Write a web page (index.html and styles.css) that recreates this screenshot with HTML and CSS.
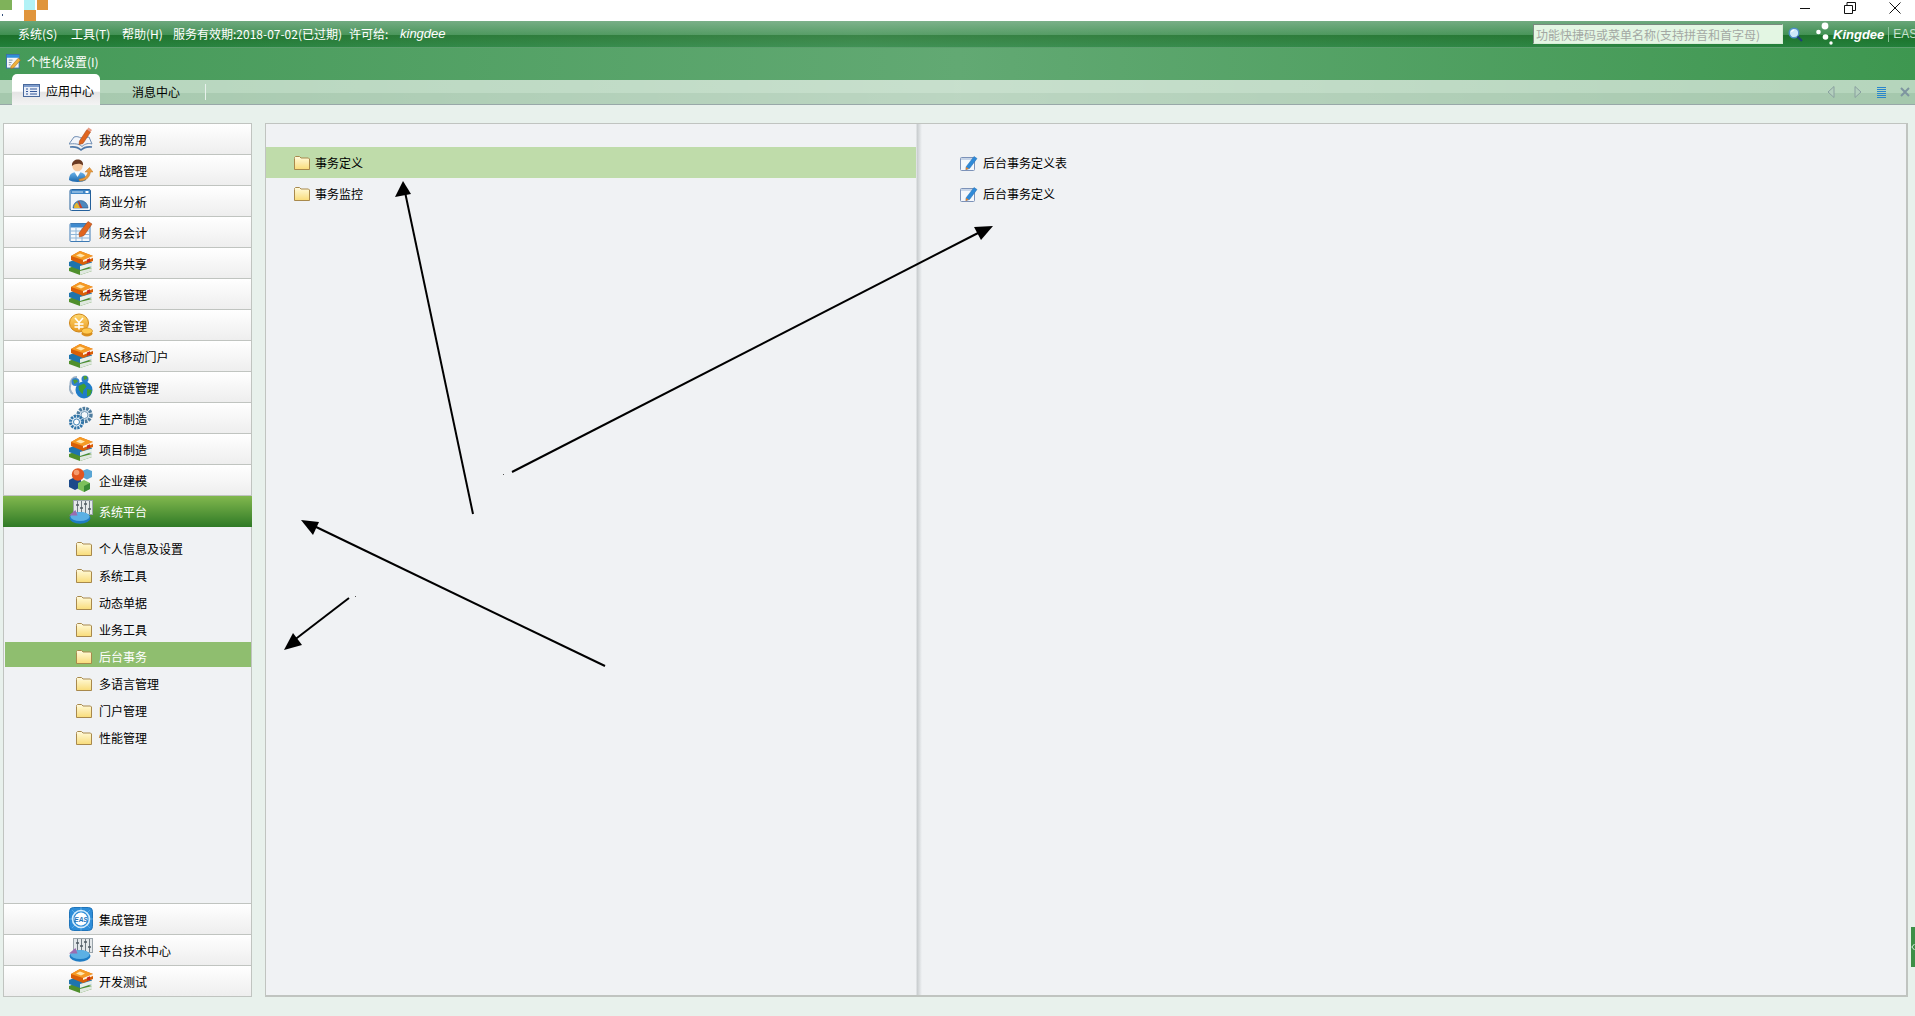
FILE: index.html
```html
<!DOCTYPE html>
<html lang="en">
<head>
  <meta charset="UTF-8">
  <meta name="viewport" content="width=device-width, initial-scale=1.0">
  <title>应用中心</title>
  <link rel="stylesheet" href="styles.css">
</head>
<body>

<!-- shared icons -->
<svg class="icon-defs" xmlns="http://www.w3.org/2000/svg">
  <defs>
    <linearGradient id="gFolder" x1="0" y1="0" x2="0" y2="1">
      <stop offset="0" stop-color="#fffbe0"/><stop offset="1" stop-color="#f9dc78"/>
    </linearGradient>
    <linearGradient id="gBlue" x1="0" y1="0" x2="0" y2="1">
      <stop offset="0" stop-color="#6db4ea"/><stop offset="1" stop-color="#1c68ad"/>
    </linearGradient>
    <linearGradient id="gCoin" x1="0" y1="0" x2="0" y2="1">
      <stop offset="0" stop-color="#ffd870"/><stop offset="1" stop-color="#e8981e"/>
    </linearGradient>
    <symbol id="i-folder" viewBox="0 0 16 14">
      <path d="M.5 2.500V1.500l1-1h4l1.500 1.500h7.500l1 1v10.500h-15z" fill="url(#gFolder)" stroke="#a8894c"/>
      <path d="M1 4.500h14" stroke="#fff3bb"/>
    </symbol>
    <symbol id="i-books" viewBox="0 0 24 24">
      <path d="M0 17l10-4 13 4v3l-12 4-11-4z" fill="#4f8f2c"/>
      <path d="M11 20l12-3v3l-12 4z" fill="#dfe8df"/>
      <path d="M0 11l10-4 13 4v4l-12 4-11-4z" fill="#1f74ae"/>
      <path d="M11 15l12-3.500v3.500l-12 4z" fill="#e8efe8"/>
      <path d="M2 5l9-5 13 5v5l-10 4-12-5z" fill="#d95f08"/>
      <path d="M2 5l9-5 13 5-10 4z" fill="#f59a24"/>
      <path d="M7 4.500l4-2 5 2-4 2z" fill="#ffe6ae"/>
      <path d="M14 9l10-4v2l-10 4z" fill="#fdf0df"/>
      <path d="M18 8.500l3-1.200v4l-1.500-.6-1.500 1.200z" fill="#c8281c"/>
    </symbol>
    <symbol id="i-openbook" viewBox="0 0 24 24">
      <path d="M0 17l5-7c3-1 5 0 7 1l8-1 3 7c-3-1-7-.5-10 2.500-3-3-8-3-13-2.500z" fill="#f2f5fa" stroke="#6f8db3"/>
      <path d="M1 20c4-.5 8 0 11 3 3-3 7-3.500 11-3" fill="none" stroke="#4f78a8" stroke-width="1.600"/>
      <path d="M10.500 14L18 2.500l3.500 2.500L14 16.500l-4 1z" fill="#e0651f" stroke="#a8491b" stroke-width=".6"/>
      <path d="M18 2.500L19.500 .5l3.500 2.500L21.500 5z" fill="#e79a82"/>
    </symbol>
    <symbol id="i-person" viewBox="0 0 24 24">
      <path d="M0 22c0-6 3-8 8.500-8s8.500 2 8.500 8c-3 2.500-14 2.500-17 0z" fill="url(#gBlue)"/>
      <path d="M5.500 14l3 5 3-5z" fill="#fff"/>
      <circle cx="8.500" cy="8" r="5.200" fill="#f6c9a0"/>
      <path d="M3 8c-1-8 12-9 11-.5-2-2.500-8-2.500-11 .5z" fill="#6a3a22"/>
      <path d="M10 21c4 0 8-2 9-7l-3 0 4.500-4.500 3.500 4.500-2.500 0c-1 6-5 9-11 9z" fill="#e8993c" stroke="#bd7a28" stroke-width=".5"/>
    </symbol>
    <symbol id="i-gauge" viewBox="0 0 24 24">
      <rect x="1" y=".5" width="20.500" height="21" rx="1.500" fill="#f2f6fb" stroke="#24609b"/>
      <rect x="1.500" y="1" width="19.500" height="4" fill="#3f86c7"/>
      <path d="M3 3h11" stroke="#cfe4f6"/><rect x="16.500" y="2" width="3" height="2" fill="#fff"/>
      <path d="M4 19a7.500 7.500 0 0 1 15 0z" fill="#4d87bd" stroke="#1f558c" stroke-width=".6"/>
      <path d="M5 19a6.500 6.500 0 0 1 3-5.500l3.500 5.500z" fill="#e8b52c"/>
      <path d="M11 19l-2-7 1 0 3.500 7z" fill="#c93b24"/>
    </symbol>
    <symbol id="i-table" viewBox="0 0 24 24">
      <rect x="1" y="3.500" width="20" height="18" rx="1" fill="#f4f8fc" stroke="#3e7ab4"/>
      <rect x="1.500" y="4" width="19" height="3.500" fill="#3f8ace"/>
      <path d="M1 11h20M1 14.500h20M1 18h20M7 8v13M13 8v13" stroke="#8fb6d9"/>
      <path d="M10 13L19 1.500l4 2.500-8 11.500-4.500 1.500z" fill="#e0651f" stroke="#a8491b" stroke-width=".6"/>
    </symbol>
    <symbol id="i-coins" viewBox="0 0 24 24">
      <ellipse cx="10" cy="10" rx="9.500" ry="9" fill="url(#gCoin)" stroke="#cf8616"/>
      <path d="M6 5l4 4.500 4-4.500M10 9.500v7M5.500 11h9M5.500 14h9" fill="none" stroke="#fff" stroke-width="1.600"/>
      <ellipse cx="18" cy="20.500" rx="5.500" ry="3" fill="#d98f1e"/>
      <ellipse cx="18" cy="18" rx="5.500" ry="3" fill="#ffc94f" stroke="#c98214" stroke-width=".6"/>
    </symbol>
    <symbol id="i-globe" viewBox="0 0 24 24">
      <path d="M1.500 10C1 5 4 2 8 2M4 19c-3-2-4-6-2.500-9" fill="none" stroke="#9cb0c4" stroke-width="2"/>
      <circle cx="6.500" cy="7" r="4" fill="#2f7fcb"/>
      <circle cx="16" cy="4" r="3.500" fill="#2f7fcb"/>
      <path d="M14.500 1l3 0 1 2.500-3.500 1.500zM4 5l3.500-.5 1.500 2-3.500 2.500z" fill="#4f9e32"/>
      <circle cx="15" cy="15" r="8.500" fill="#1f7cc8"/>
      <path d="M9.500 11l5.500-2.500 2.500 3-3 3.500-1 4.500-3.500-4.500zM18 14l5 1-1.500 5-3.500 1.500z" fill="#429e30"/>
    </symbol>
    <symbol id="i-gears" viewBox="0 0 24 24">
      <circle cx="15.500" cy="9" r="6.500" fill="#dce8f2" stroke="#4f7d9f" stroke-width="3.400" stroke-dasharray="2.500 1"/>
      <circle cx="15.500" cy="9" r="3.500" fill="#f4f8fb" stroke="#6f96b3"/>
      <circle cx="7.500" cy="16" r="6" fill="#e6eff6" stroke="#2f74a8" stroke-width="3" stroke-dasharray="2.200 .9"/>
      <circle cx="7.500" cy="16" r="3" fill="#fff" stroke="#3f82b4"/>
    </symbol>
    <symbol id="i-cubes" viewBox="0 0 24 24">
      <path d="M13 3l5-2 5 2v6l-5 2.500-5-2.500z" fill="#5aa5d4"/>
      <path d="M0 12l6-3 6 3v7l-6 3-6-3z" fill="#1d4a8a"/>
      <path d="M9 15l6-3 6 3v6l-6 3-6-3z" fill="#7cc05b"/>
      <path d="M15 18v6l6-3v-6z" fill="#3a8a35"/>
      <circle cx="9" cy="6.500" r="6.200" fill="#e2551f"/>
      <circle cx="7.500" cy="4.500" r="2.800" fill="#f59a6e"/>
    </symbol>
    <symbol id="i-sliders" viewBox="0 0 24 24">
      <rect x="4.500" y=".5" width="19" height="14" fill="#e4e8ea" stroke="#9aa4aa"/>
      <path d="M8.500 1v13M12.500 1v13M16.500 1v13M20.500 1v13" stroke="#6f7a82"/>
      <path d="M7 5h3M11 8h3M15 4h3M19 9h3" stroke="#4f5a62" stroke-width="1.500"/>
      <ellipse cx="11" cy="18" rx="10.500" ry="5.800" fill="#1f7cc4"/>
      <ellipse cx="11" cy="16.500" rx="9.500" ry="4.600" fill="#5cb0e4"/>
      <path d="M0 15.500l6.500-5.500 2 5.500z" fill="#9a6db0"/>
    </symbol>
    <symbol id="i-eas" viewBox="0 0 24 24">
      <rect x=".5" y=".5" width="23" height="23" rx="4" fill="#2e8dd8" stroke="#1f74ba"/>
      <path d="M0 12h24M12 0v24M3 3l18 18M21 3L3 21" stroke="#7cc0ee" stroke-width=".6"/>
      <circle cx="12" cy="12" r="8.500" fill="none" stroke="#d5ecfb" stroke-width="1.600"/>
      <circle cx="12" cy="12" r="6.500" fill="#fff"/>
      <text x="12" y="14.500" text-anchor="middle" class="eas-text">EAS</text>
    </symbol>
    <symbol id="i-note" viewBox="0 0 18 16">
      <rect x=".5" y="2.500" width="14" height="13" rx="1" fill="#f5f8fc" stroke="#7c92b8"/>
      <path d="M1 3h13v2H1z" fill="#c7d5e8"/>
      <path d="M6 12L14 1.500l3 2L9.500 13.500 6 14.500z" fill="#2f8ad8" stroke="#1e6cb0" stroke-width=".5"/>
      <path d="M5.500 15l.8-3 2.500 1.800z" fill="#e8802a"/>
    </symbol>
    <symbol id="i-settings" viewBox="0 0 16 16">
      <rect x=".5" y=".5" width="13.500" height="14.500" fill="#f3f6fa" stroke="#3b6ea5"/>
      <rect x="1" y="1" width="13" height="3" fill="#2f8fd8"/>
      <path d="M3 6.500h4M3 9h3M3 11.500h2" stroke="#7c8ea0"/>
      <path d="M5.500 13L13 4.500l2.500 2-7.500 8.500-3 .5z" fill="#f0b23c" stroke="#a06a1c" stroke-width=".6"/>
    </symbol>
    <symbol id="i-list" viewBox="0 0 17 13">
      <rect x=".5" y=".5" width="16" height="12" fill="#e8eef8" stroke="#49699c"/>
      <path d="M1 1h15v2H1z" fill="#7e9ccc"/>
      <path d="M3 5h2M3 7.500h2M3 10h2M7 5h7M7 7.500h7M7 10h7" stroke="#34589a"/>
    </symbol>
  </defs>
</svg>

<div class="titlebar">
  <svg class="logo" viewBox="0 0 48 21" width="48" height="21">
    <rect width="12" height="10" fill="#7fb25a"/>
    <rect x="24" width="11" height="10" fill="#b2f2f6"/>
    <rect x="37" width="11" height="10" fill="#e0953c"/>
    <rect x="24" y="10" width="12" height="11" fill="#e0953c"/>
    <rect x="2" y="14" width="1" height="2" fill="#34507c"/>
  </svg>
  <div class="win-controls">
    <svg width="12" height="12" viewBox="0 0 12 12"><path d="M1 6.500h10" stroke="#111"/></svg>
    <svg width="12" height="12" viewBox="0 0 12 12"><path d="M.5 3.500h8v8h-8zM3 3.500V.5h8.500v8H8.500" fill="none" stroke="#111"/></svg>
    <svg width="12" height="12" viewBox="0 0 12 12"><path d="M.5.5l11 11M11.500.5l-11 11" stroke="#111"/></svg>
  </div>
</div>

<div class="menubar">
  <span class="menu-item">系统(S)</span>
  <span class="menu-item">工具(T)</span>
  <span class="menu-item">帮助(H)</span>
  <span class="menu-info">服务有效期:2018-07-02(已过期)</span>
  <span class="menu-lic">许可给:</span>
  <em class="menu-user">kingdee</em>
  <div class="menu-right">
    <input class="quick-search" type="text" placeholder="功能快捷码或菜单名称(支持拼音和首字母)">
    <svg class="search-icon" width="15" height="15" viewBox="0 0 15 15">
      <circle cx="6" cy="6" r="4.800" fill="#cfe8fb" stroke="#4f8ec8" stroke-width="1.400"/>
      <path d="M3.500 5a3 3 0 0 1 2.500-2" fill="none" stroke="#fff" stroke-width="1.200"/>
      <path d="M9.500 9.500l4.500 4.500" stroke="#1f3f78" stroke-width="2.200"/>
    </svg>
    <svg class="brand-dots" width="18" height="24" viewBox="0 0 18 24">
      <circle cx="9" cy="4" r="3.400" fill="#fff"/>
      <circle cx="2.500" cy="10" r="2.300" fill="#fff"/>
      <circle cx="9.500" cy="15" r="2.800" fill="#fff"/>
      <circle cx="15" cy="21" r="1.700" fill="#fff"/>
    </svg>
    <span class="brand">Kingdee</span>
    <span class="brand-eas">EAS</span>
  </div>
</div>

<div class="toolbar">
  <svg class="tool-icon" width="15" height="15"><use href="#i-settings"/></svg>
  <span>个性化设置(I)</span>
</div>

<div class="tabbar">
  <div class="tab tab-active">
    <svg width="17" height="13"><use href="#i-list"/></svg>
    <span>应用中心</span>
  </div>
  <div class="tab">消息中心</div>
  <div class="tab-sep"></div>
  <div class="tab-tools">
    <svg class="tool-prev" width="8" height="12" viewBox="0 0 8 12"><path d="M7 .5v11L1 6z" fill="#b3d0bd" stroke="#8aa0a0"/></svg>
    <svg width="8" height="12" viewBox="0 0 8 12"><path d="M1 .5v11L7 6z" fill="#b3d0bd" stroke="#8aa0a0"/></svg>
    <svg width="9" height="11" viewBox="0 0 9 11"><path d="M0 .5h9M0 2.500h9M0 4.500h9M0 6.500h9M0 8.500h9M0 10.500h9" stroke="#2a86cc"/></svg>
    <svg class="tool-close" width="10" height="10" viewBox="0 0 10 10"><path d="M1 1l8 8M9 1L1 9" stroke="#7e95a0" stroke-width="2"/></svg>
  </div>
</div>

<div class="main">
  <div class="nav">
    <div class="nav-row"><svg class="nav-icon"><use href="#i-openbook"/></svg>我的常用</div>
    <div class="nav-row"><svg class="nav-icon"><use href="#i-person"/></svg>战略管理</div>
    <div class="nav-row"><svg class="nav-icon"><use href="#i-gauge"/></svg>商业分析</div>
    <div class="nav-row"><svg class="nav-icon"><use href="#i-table"/></svg>财务会计</div>
    <div class="nav-row"><svg class="nav-icon"><use href="#i-books"/></svg>财务共享</div>
    <div class="nav-row"><svg class="nav-icon"><use href="#i-books"/></svg>税务管理</div>
    <div class="nav-row"><svg class="nav-icon"><use href="#i-coins"/></svg>资金管理</div>
    <div class="nav-row"><svg class="nav-icon"><use href="#i-books"/></svg>EAS移动门户</div>
    <div class="nav-row"><svg class="nav-icon"><use href="#i-globe"/></svg>供应链管理</div>
    <div class="nav-row"><svg class="nav-icon"><use href="#i-gears"/></svg>生产制造</div>
    <div class="nav-row"><svg class="nav-icon"><use href="#i-books"/></svg>项目制造</div>
    <div class="nav-row"><svg class="nav-icon"><use href="#i-cubes"/></svg>企业建模</div>
    <div class="nav-row nav-row-active"><svg class="nav-icon"><use href="#i-sliders"/></svg>系统平台</div>

    <div class="sub-list">
      <div class="sub-item"><svg class="folder"><use href="#i-folder"/></svg>个人信息及设置</div>
      <div class="sub-item"><svg class="folder"><use href="#i-folder"/></svg>系统工具</div>
      <div class="sub-item"><svg class="folder"><use href="#i-folder"/></svg>动态单据</div>
      <div class="sub-item"><svg class="folder"><use href="#i-folder"/></svg>业务工具</div>
      <div class="sub-item sub-item-active"><svg class="folder"><use href="#i-folder"/></svg>后台事务</div>
      <div class="sub-item"><svg class="folder"><use href="#i-folder"/></svg>多语言管理</div>
      <div class="sub-item"><svg class="folder"><use href="#i-folder"/></svg>门户管理</div>
      <div class="sub-item"><svg class="folder"><use href="#i-folder"/></svg>性能管理</div>
    </div>

    <div class="nav-row nav-row-top"><svg class="nav-icon"><use href="#i-eas"/></svg>集成管理</div>
    <div class="nav-row"><svg class="nav-icon"><use href="#i-sliders"/></svg>平台技术中心</div>
    <div class="nav-row"><svg class="nav-icon"><use href="#i-books"/></svg>开发测试</div>
  </div>

  <div class="content">
    <div class="tree">
      <div class="tree-row tree-row-active"><svg class="folder"><use href="#i-folder"/></svg>事务定义</div>
      <div class="tree-row"><svg class="folder"><use href="#i-folder"/></svg>事务监控</div>
    </div>
    <div class="splitter"></div>
    <div class="detail">
      <div class="detail-row"><svg class="note"><use href="#i-note"/></svg>后台事务定义表</div>
      <div class="detail-row"><svg class="note"><use href="#i-note"/></svg>后台事务定义</div>
    </div>
  </div>
  <svg class="side-handle" width="4" height="40" viewBox="0 0 4 40">
    <rect width="4" height="40" fill="#3d8f47"/>
    <path d="M3.500 17L.8 20l2.700 3" fill="none" stroke="#e8f1ec"/>
  </svg>
</div>

<!-- hand drawn arrows on top of the window -->
<svg class="arrows" width="1915" height="1016" viewBox="0 0 1915 1016">
  <g stroke="#000" stroke-width="2">
    <path d="M473 514L405 192"/>
    <path d="M512 472L980 232"/>
    <path d="M605 666L312 525"/>
    <path d="M349 598L293 641"/>
  </g>
  <path d="M403 181l-8 16 16-3z"/>
  <path d="M993 226l-19 1 7 13z"/>
  <path d="M301 520l12 15 6-13z"/>
  <path d="M284 650l18-5-9-12z"/>
  <rect x="503" y="474" width="1" height="1" fill="#555"/>
  <rect x="355" y="596" width="1" height="1" fill="#555"/>
</svg>

</body>
</html>
```

FILE: styles.css
```css
html, body {
  margin: 0;
  height: 100%;
}
body {
  display: flex;
  flex-direction: column;
  height: 1016px;
  overflow: hidden;
  position: relative;
  background-color: #e8f1ec;
  font-family: "Noto Sans CJK SC", "Liberation Sans", sans-serif;
  font-size: 12px;
  color: #000;
}
.icon-defs {
  width: 0;
  height: 0;
  flex: none;
}
.eas-text {
  font-family: "Liberation Sans", sans-serif;
  font-size: 6.500px;
  font-weight: bold;
  font-style: italic;
  fill: #1f74ba;
}

/* top of the window */
.titlebar {
  display: flex;
  justify-content: space-between;
  flex: none;
  height: 21px;
  background-color: #fff;
}
.win-controls {
  display: flex;
  gap: 33px;
  padding: 2px 14px 0 0;
}
.menubar {
  display: flex;
  align-items: center;
  flex: none;
  height: 24px;
  padding: 0 0 2px 18px;
  background:
    linear-gradient(90deg, rgba(255, 255, 255, 0), rgba(255, 255, 255, 0.14) 45%, rgba(255, 255, 255, 0)),
    linear-gradient(#6aa67a 0, #3e8f50 14px, #1b7029 14px, #22803a 100%);
  border-bottom: 1px solid #5da06f;
  color: #fff;
  white-space: nowrap;
}
.menu-item {
  width: 53px;
  flex: none;
}
.menu-item:nth-child(2) {
  width: 51px;
}
.menu-item:nth-child(3) {
  width: 51px;
}
.menu-info {
  width: 176px;
  flex: none;
}
.menu-lic {
  width: 51px;
  flex: none;
}
.menu-user {
  font-family: "Liberation Sans", sans-serif;
  font-size: 13px;
}
.menu-right {
  display: flex;
  align-items: center;
  margin-top: 2px;
  margin-left: auto;
  width: 382px;
  flex: none;
  overflow: hidden;
}
.quick-search {
  box-sizing: border-box;
  width: 250px;
  height: 20px;
  flex: none;
  padding: 0 2px;
  background-color: #e3f6e3;
  border: 1px solid #d8ecd8;
  border-top: 1px solid #7a8a80;
  border-left: 1px solid #7a8a80;
  font: inherit;
}
.quick-search::placeholder {
  color: #a3a8a3;
  opacity: 1;
}
.search-icon {
  flex: none;
  margin-left: 5px;
}
.brand-dots {
  flex: none;
  margin-left: 13px;
}
.brand {
  margin-left: -1px;
  padding-right: 4px;
  border-right: 1px solid #8cc29a;
  font-family: "Liberation Sans", sans-serif;
  font-size: 13px;
  font-weight: bold;
  font-style: italic;
}
.brand-eas {
  margin-left: 4px;
  font-family: "Liberation Sans", sans-serif;
  color: #c8e2cf;
}
.toolbar {
  display: flex;
  align-items: center;
  gap: 6px;
  flex: none;
  height: 27px;
  padding: 0 0 5px 6px;
  background: linear-gradient(90deg, #459a58, #62a973 50%, #3e9750);
  color: #fff;
}
.tool-icon {
  flex: none;
}
.tabbar {
  display: flex;
  align-items: flex-end;
  flex: none;
  box-sizing: border-box;
  height: 25px;
  padding-left: 12px;
  background:
    linear-gradient(90deg, rgba(255, 255, 255, 0), rgba(255, 255, 255, 0.25) 50%, rgba(255, 255, 255, 0)),
    linear-gradient(#b5d5bc 0, #b5d5bc 13px, #a5c8ad 13px, #a5c8ad 100%);
  border-bottom: 1px solid #98a8a8;
}
.tab {
  display: flex;
  align-items: center;
  box-sizing: border-box;
  height: 24px;
  padding: 0 0 2px 32px;
  width: 105px;
}
.tab-active {
  gap: 6px;
  width: 88px;
  height: 31px;
  margin-bottom: -1px;
  padding: 2px 0 0 11px;
  background: linear-gradient(#fff 0, #fff 55%, #e4e4e4 60%, #f4f4f4 100%);
  border-radius: 5px 5px 0 0;
}
.tab-sep {
  width: 1px;
  height: 16px;
  margin-bottom: 4px;
  background-color: #e8f1ec;
}
.tab-tools {
  display: flex;
  align-items: center;
  gap: 15px;
  height: 24px;
  margin-left: auto;
  padding-right: 5px;
}
.tool-prev {
  margin-right: 4px;
}
.tool-close {
  margin-left: -1px;
}

/* main area */
.main {
  display: flex;
  flex: 1;
  gap: 13px;
  min-height: 0;
  padding: 18px 7px 19px 3px;
}
.nav {
  display: flex;
  flex-direction: column;
  box-sizing: border-box;
  width: 249px;
  flex: none;
  background-color: #f0f2f4;
  border: 1px solid #c0c4c0;
  border-bottom: 0;
}
.nav-row {
  display: flex;
  align-items: center;
  box-sizing: border-box;
  height: 31px;
  flex: none;
  padding-left: 65px;
  background: linear-gradient(#fff, #eeeeee);
  border-bottom: 1px solid #c0c4c0;
}
.nav-row-top {
  border-top: 1px solid #c0c4c0;
  height: 32px;
}
.nav-row-active {
  margin: 0 -1px;
  padding-left: 66px;
  background: linear-gradient(#82b84e, #2f7a26);
  border-bottom: 0;
  color: #fff;
}
.nav-icon {
  width: 24px;
  height: 24px;
  margin-right: 6px;
  flex: none;
}
.sub-list {
  flex: 1;
  padding: 7px 0 0 1px;
}
.sub-item {
  display: flex;
  align-items: center;
  box-sizing: border-box;
  height: 25px;
  margin-bottom: 2px;
  padding: 4px 0 0 71px;
}
.sub-item-active {
  background-color: #8fbe6f;
  color: #fff;
}
.folder {
  width: 16px;
  height: 14px;
  margin-right: 7px;
  flex: none;
}
.content {
  display: flex;
  flex: 1;
  min-width: 0;
  background-color: #f0f2f4;
  border: 1px solid #c0c4c0;
  border-right-width: 2px;
  border-bottom-width: 2px;
}
.tree {
  box-sizing: border-box;
  width: 650px;
  flex: none;
  padding-top: 23px;
}
.tree-row {
  display: flex;
  align-items: center;
  height: 31px;
  padding-left: 28px;
}
.tree-row .folder {
  margin-right: 5px;
}
.tree-row-active {
  background-color: #bfdcaa;
}
.splitter {
  width: 6px;
  flex: none;
  background: linear-gradient(90deg, #eef0f2 0, #c9cdcf 20%, #f0f2f4 100%);
}
.detail {
  flex: 1;
  padding: 23px 0 0 38px;
}
.detail-row {
  display: flex;
  align-items: center;
  height: 31px;
}
.note {
  width: 18px;
  height: 16px;
  margin-right: 5px;
  flex: none;
}
.side-handle {
  position: absolute;
  right: 0;
  bottom: 49px;
}

/* arrows lie over everything */
.arrows {
  position: absolute;
  top: 0;
  left: 0;
  pointer-events: none;
}
```
